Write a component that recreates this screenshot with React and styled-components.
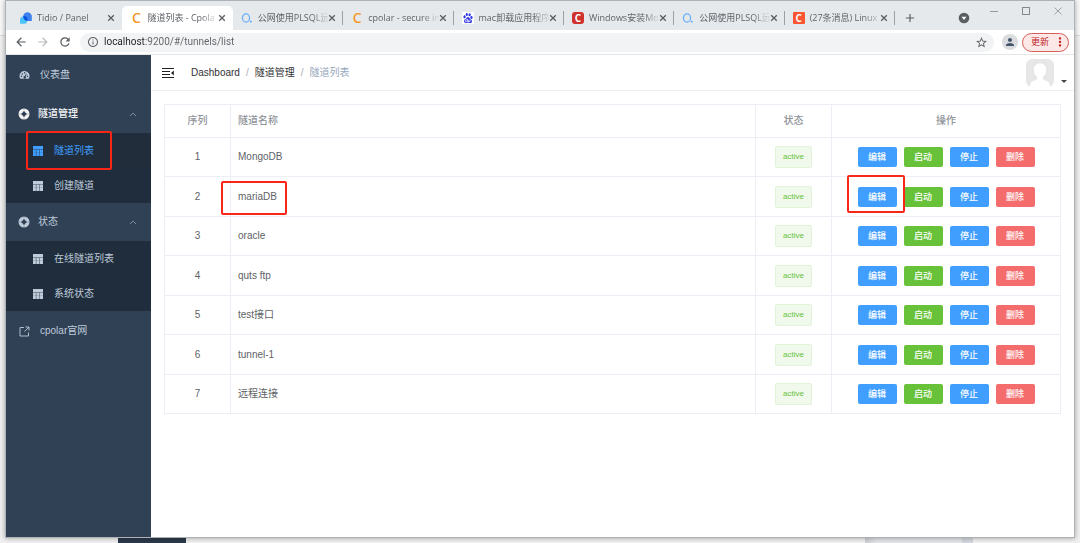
import React, { Component } from "react";
import styled, { createGlobalStyle, css } from "styled-components";
import {
  MdArrowBack,
  MdArrowForward,
  MdRefresh,
  MdInfoOutline,
  MdStarBorder,
  MdPerson,
  MdMoreVert,
  MdAdd
} from "react-icons/md";
import { SiBaidu } from "react-icons/si";

const colors = {
  menu: "#304156",
  subMenu: "#1f2d3d",
  menuText: "#bfcbd9",
  blue: "#409eff",
  green: "#67c23a",
  red: "#f56c6c",
  border: "#ebeef5",
  text: "#606266",
  lightText: "#909399",
  mark: "#fa2618"
};

const tabs = [
  { icon: "tidio", title: "Tidio / Panel" },
  { icon: "cpolar", title: "隧道列表 - Cpola", active: true },
  { icon: "ring", title: "公网使用PLSQL远", line: true },
  { icon: "cpolar", title: "cpolar - secure in", line: true },
  { icon: "baidu", title: "mac卸载应用程序", line: true },
  { icon: "csdnDark", title: "Windows安装Mo", line: true },
  { icon: "ring", title: "公网使用PLSQL远", line: true },
  { icon: "csdn", title: "(27条消息) Linux", line: true }
];

const tunnels = [
  { name: "MongoDB" },
  { name: "mariaDB", marked: true },
  { name: "oracle" },
  { name: "quts ftp" },
  { name: "test接口" },
  { name: "tunnel-1" },
  { name: "远程连接" }
];

const TidioIcon = () => (
  <svg width="12" height="12" viewBox="0 0 12 12">
    <path d="M3.200 4.300a4.300 4.300 0 1 1 8.600.7V9H7.600a4.300 4.300 0 0 1-4.400-4.700z" fill="#3b82f0" />
    <path d="M0 11.800V7.800a3.700 3.700 0 1 1 3.700 4z" fill="#4cc3fb" />
    <path d="M3.300 4.100a3.700 3.700 0 0 1 4.100 4.900 4.300 4.300 0 0 1-4.100-4.900z" fill="#0b4fdc" />
  </svg>
);

const RingIcon = () => (
  <svg width="12" height="12" viewBox="0 0 12 12">
    <ellipse cx="5" cy="6" rx="3.6" ry="4.1" fill="none" stroke="#6ab0f8" strokeWidth="1.3" />
    <circle cx="9.8" cy="9.6" r="0.9" fill="#409eff" />
  </svg>
);

const CrossIcon = () => (
  <svg width="8" height="8" viewBox="0 0 8 8">
    <path d="M1.200 1.200l5.600 5.600M6.800 1.200L1.200 6.800" stroke="currentColor" strokeWidth="1.300" />
  </svg>
);

const DropIcon = () => (
  <svg width="12" height="12" viewBox="0 0 12 12">
    <circle cx="6" cy="6" r="5.300" fill="#5a5d61" />
    <path d="M3.500 4.700h5L6 7.900z" fill="#fff" />
  </svg>
);

const DashboardIcon = () => (
  <svg width="11" height="10" viewBox="0 0 22 20">
    <path
      fill={colors.menuText}
      d="M11 2A10 10 0 0 0 1 12c0 2 .6 3.8 1.5 5.4h17A10 10 0 0 0 11 2z"
    />
    <g fill={colors.menu}>
      <circle cx="5" cy="12.5" r="1.5" />
      <circle cx="6.8" cy="7.8" r="1.5" />
      <circle cx="11.3" cy="5.6" r="1.5" />
      <circle cx="17" cy="12.5" r="1.5" />
      <path d="M14 6.8l1.5.8-2.3 5.3a2.5 2.5 0 1 1-1.7-.7z" />
    </g>
  </svg>
);

const HelpIcon = () => (
  <svg width="12" height="12" viewBox="0 0 24 24">
    <circle cx="12" cy="12" r="11" fill="currentColor" />
    <path
      d="M12 5.500l2.200 2.800 1.500 1.500 2.800 2.200-2.800 2.200-1.500 1.500-2.200 2.800-2.200-2.800-1.500-1.500L5.500 12l2.800-2.200 1.500-1.500z"
      fill={colors.menu}
    />
    <path d="M12 1v4M12 19v4M1 12h4M19 12h4" stroke={colors.menu} strokeWidth="1.500" opacity="0.4" />
  </svg>
);

const GridIcon = () => (
  <svg width="10" height="10" viewBox="0 0 20 20">
    <path
      fill="currentColor"
      d="M0 0h20v6H0zM0 7.500h5.500V20H0zM7 7.500h5.500V20H7zM14 7.500h6V20h-6z"
    />
    <path fill="currentColor" opacity="0.45" d="M0 6h20v14H0z" />
    <path d="M0 13.500h20" stroke={colors.subMenu} opacity="0.35" />
  </svg>
);

const LinkIcon = () => (
  <svg width="11" height="11" viewBox="0 0 22 22" fill="none" stroke="currentColor" strokeWidth="1.8">
    <path d="M10 3H2v17h17v-7M13 2h7v7M20 2l-9 9" />
  </svg>
);

const ChevronIcon = () => (
  <svg width="8" height="5" viewBox="0 0 8 5" fill="none" stroke="#7f8b99">
    <path d="M1 4l3-3 3 3" />
  </svg>
);

const FoldIcon = () => (
  <svg width="12" height="12" viewBox="0 0 12 12">
    <path d="M0 1.500h12M0 4.500h8M0 7.500h8M0 10.500h12" stroke="#222" />
    <path d="M11.800 3.600v4.800L9 6z" fill="#222" />
  </svg>
);

const AvatarIcon = () => (
  <svg width="28" height="28" viewBox="0 0 28 28">
    <rect width="28" height="28" rx="6" fill="#e7e7e7" />
    <path
      fill="#fff"
      d="M14 4.500c4 0 6.300 2.600 6.100 6.200 0 3.200-1.500 5.700-3.100 7.300v2.200c1.800 1.500 5.500 1.600 6.500 4.500.4 1.200.5 2.300.5 3.300H4c0-1 .1-2.100.5-3.300 1-2.900 4.700-3 6.500-4.500V18c-1.600-1.600-3.100-4.100-3.100-7.300-.2-3.600 2.100-6.200 6.100-6.200z"
    />
  </svg>
);

const Favicon = ({ type }) => {
  if (type === "tidio") return <TidioIcon />;
  if (type === "ring") return <RingIcon />;
  if (type === "baidu")
    return (
      <Badge $bg="#fff">
        <SiBaidu size={10} color="#2932e1" />
      </Badge>
    );
  if (type === "csdn") return <Badge $bg="#fc5531">C</Badge>;
  if (type === "csdnDark") return <Badge $bg="#d0312d" $round>C</Badge>;
  return <CpolarLogo>C</CpolarLogo>;
};

class Browser extends Component {
  render() {
    return (
      <div>
        <TabStrip>
          <Tabs>
            {tabs.map((tab, index) => (
              <Tab key={index} $active={tab.active} $line={tab.line}>
                <Favicon type={tab.icon} />
                <TabTitle>{tab.title}</TabTitle>
                <IconButton aria-label="关闭标签页">
                  <CrossIcon />
                </IconButton>
              </Tab>
            ))}
          </Tabs>
          <NewTab aria-label="新标签页">
            <MdAdd size={14} />
          </NewTab>
          <SearchTabs aria-label="搜索标签页">
            <DropIcon />
          </SearchTabs>
          <WindowButtons>
            <WindowButton aria-label="最小化">
              <svg width="8" height="8" viewBox="0 0 8 8"><path d="M0 4.500h8" stroke="#999" /></svg>
            </WindowButton>
            <WindowButton aria-label="最大化">
              <svg width="8" height="8" viewBox="0 0 8 8"><rect x=".5" y=".5" width="7" height="7" fill="none" stroke="#888" /></svg>
            </WindowButton>
            <WindowButton aria-label="关闭">
              <svg width="8" height="8" viewBox="0 0 8 8"><path d="M.5.5l7 7M7.500.5l-7 7" stroke="#999" strokeWidth=".9" /></svg>
            </WindowButton>
          </WindowButtons>
        </TabStrip>
        <Toolbar>
          <NavButtons>
            <IconButton aria-label="后退"><MdArrowBack size={14} /></IconButton>
            <IconButton aria-label="前进" $faded><MdArrowForward size={14} /></IconButton>
            <IconButton aria-label="刷新"><MdRefresh size={14} /></IconButton>
          </NavButtons>
          <AddressBar>
            <MdInfoOutline size={12} />
            <AddressInput
              type="text"
              aria-label="地址"
              defaultValue="localhost:9200/#/tunnels/list"
            />
            <IconButton aria-label="收藏"><MdStarBorder size={13} /></IconButton>
          </AddressBar>
          <Profile aria-label="个人资料"><MdPerson size={12} /></Profile>
          <UpdateButton>
            更新
            <MdMoreVert size={14} />
          </UpdateButton>
        </Toolbar>
      </div>
    );
  }
}

const Sidebar = () => (
  <Menu>
    <MenuItem href="#/dashboard">
      <DashboardIcon />
      仪表盘
    </MenuItem>
    <MenuGroup $active>
      <HelpIcon />
      <span>隧道管理</span>
      <ChevronIcon />
    </MenuGroup>
    <SubMenu>
      <SubItem href="#/tunnels/list" $active>
        <GridIcon />
        隧道列表
        <MenuMark />
      </SubItem>
      <SubItem href="#/tunnels/create">
        <GridIcon />
        创建隧道
      </SubItem>
    </SubMenu>
    <MenuGroup>
      <HelpIcon />
      <span>状态</span>
      <ChevronIcon />
    </MenuGroup>
    <SubMenu>
      <SubItem href="#/status/online">
        <GridIcon />
        在线隧道列表
      </SubItem>
      <SubItem href="#/status/system">
        <GridIcon />
        系统状态
      </SubItem>
    </SubMenu>
    <MenuItem href="#/site">
      <LinkIcon />
      cpolar官网
    </MenuItem>
  </Menu>
);

class TunnelTable extends Component {
  loopTunnels() {
    return tunnels.map((tunnel, index) => (
      <tr key={index}>
        <td>{index + 1}</td>
        <NameCell>
          <Anchor>
            {tunnel.name}
            {tunnel.marked && <NameMark />}
          </Anchor>
        </NameCell>
        <td>
          <Tag>active</Tag>
        </td>
        <td>
          <Actions>
            <Anchor>
              <ActionButton $color={colors.blue}>编辑</ActionButton>
              {tunnel.marked && <EditMark />}
            </Anchor>
            <ActionButton $color={colors.green}>启动</ActionButton>
            <ActionButton $color={colors.blue}>停止</ActionButton>
            <ActionButton $color={colors.red}>删除</ActionButton>
          </Actions>
        </td>
      </tr>
    ));
  }

  render() {
    return (
      <Table>
        <colgroup>
          <Col $width="66px" />
          <Col />
          <Col $width="76px" />
          <Col $width="229px" />
        </colgroup>
        <thead>
          <tr>
            <th>序列</th>
            <NameHead>隧道名称</NameHead>
            <th>状态</th>
            <th>操作</th>
          </tr>
        </thead>
        <tbody>{this.loopTunnels()}</tbody>
      </Table>
    );
  }
}

export default function App() {
  return (
    <Desktop>
      <GlobalStyle />
      <Window>
        <Browser />
        <Page>
          <Sidebar />
          <Main>
            <Navbar>
              <IconButton aria-label="折叠菜单"><FoldIcon /></IconButton>
              <Breadcrumb>
                <Crumb href="#/dashboard">Dashboard</Crumb>
                <Slash>/</Slash>
                <Crumb href="#/tunnels">隧道管理</Crumb>
                <Slash>/</Slash>
                <CurrentCrumb>隧道列表</CurrentCrumb>
              </Breadcrumb>
              <UserButton aria-label="用户菜单">
                <AvatarIcon />
                <Caret />
              </UserButton>
            </Navbar>
            <Content>
              <TunnelTable />
            </Content>
          </Main>
        </Page>
      </Window>
      <Behind>
        <DarkStrip />
        <GreyStrip />
      </Behind>
    </Desktop>
  );
}

const GlobalStyle = createGlobalStyle`
  * {
    box-sizing: border-box;
  }
  body {
    margin: 0;
    font-family: "Liberation Sans", "Noto Sans CJK SC", sans-serif;
    font-size: 10px;
    line-height: 14px;
    color: ${colors.text};
  }
  button, input {
    font: inherit;
    color: inherit;
    border: none;
    background: none;
    padding: 0;
    margin: 0;
  }
  button {
    cursor: pointer;
  }
  a {
    color: inherit;
    text-decoration: none;
  }
  svg {
    display: block;
    flex: none;
  }
`;

const Desktop = styled.div`
  display: flex;
  flex-direction: column;
  min-height: 100vh;
  background: linear-gradient(#f8f8f9 35px, #dcdcdd 35px, #dcdcdd 36px, #f0f0f1 36px);
`;

const Window = styled.div`
  position: relative;
  flex: 1;
  display: flex;
  flex-direction: column;
  margin: 0 5px;
  background: #fff;
  border: 1px solid #aeb1b5;
  box-shadow: 0 0 5px rgba(0, 0, 0, 0.35);
`;

const Behind = styled.div`
  display: flex;
  justify-content: space-between;
  height: 5px;
  padding: 0 107px 0 118px;
`;

const DarkStrip = styled.div`
  width: 68px;
  background: #2b394b;
`;

const GreyStrip = styled.div`
  width: 108px;
  background: linear-gradient(to right, #cdced1, #e4e5e8 12px, #e4e5e8 97px, #d3d6de 97px);
`;

const IconButton = styled.button`
  display: flex;
  align-items: center;
  justify-content: center;
  color: #5a5d61;
  ${props => props.$faded && css`
    color: #b9bbbe;
  `}
`;

const TabStrip = styled.div`
  display: flex;
  height: 29px;
  padding-left: 6px;
  background: #e6e9ec;
  color: #5f6368;
  font-family: "Open Sans", "Noto Sans CJK SC", sans-serif;
  font-size: 9px;
`;

const Tabs = styled.div`
  display: flex;
  flex: 0 1 883px;
  min-width: 0;
  padding-top: 5px;
`;

const Tab = styled.div`
  position: relative;
  display: flex;
  align-items: center;
  flex: 1 1 0;
  min-width: 0;
  padding: 0 7px 0 8px;
  border-radius: 5px 5px 0 0;

  ${props => props.$active && css`
    background: #fff;
  `}

  ${props => props.$line && css`
    &::after {
      content: "";
      position: absolute;
      right: 0;
      top: 5px;
      width: 1px;
      height: 14px;
      background: #9da1a6;
    }
  `}
`;

const TabTitle = styled.span`
  flex: 1;
  min-width: 0;
  margin-left: 5px;
  overflow: hidden;
  white-space: nowrap;
  mask-image: linear-gradient(to right, #000 54px, transparent 72px);
`;

const Badge = styled.span`
  display: flex;
  align-items: center;
  justify-content: center;
  flex: none;
  width: 12px;
  height: 12px;
  border-radius: ${props => (props.$round ? "3px" : "1px")};
  background: ${props => props.$bg};
  color: #fff;
  font-size: 10px;
  font-weight: 700;
`;

const CpolarLogo = styled.span`
  flex: none;
  width: 12px;
  text-align: center;
  color: #f7941e;
  font-family: "Noto Sans", sans-serif;
  font-size: 14px;
  font-weight: 500;
`;

const NewTab = styled(IconButton)`
  width: 30px;
  padding-top: 5px;
`;

const SearchTabs = styled(IconButton)`
  margin-left: auto;
  padding: 5px 8px 0 0;
`;

const WindowButtons = styled.div`
  display: flex;
  height: 19px;
`;

const WindowButton = styled(IconButton)`
  width: 32px;
`;

const Toolbar = styled.div`
  display: flex;
  align-items: center;
  height: 25px;
  padding: 0 5px 0 8px;
  border-bottom: 1px solid #e4e6e8;
`;

const NavButtons = styled.div`
  display: flex;
  gap: 8px;
`;

const AddressBar = styled.div`
  display: flex;
  align-items: center;
  flex: 1;
  height: 19px;
  margin: 0 8px;
  padding: 0 6px 0 7px;
  border-radius: 10px;
  background: #f1f3f4;
  color: #5f6368;
`;

const AddressInput = styled.input`
  flex: 1;
  min-width: 0;
  margin-left: 5px;
  outline: none;
  font-family: Roboto, sans-serif;
  background: linear-gradient(to right, #202124 42px, #5f6368 42px);
  background-clip: text;
  -webkit-text-fill-color: transparent;
`;

const Profile = styled(IconButton)`
  width: 16px;
  height: 16px;
  border-radius: 50%;
  background: #dadce0;
  color: #44546a;
`;

const UpdateButton = styled.button`
  display: flex;
  align-items: center;
  justify-content: space-between;
  width: 47px;
  height: 19px;
  margin-left: 4px;
  padding: 0 1px 0 8px;
  border: 1px solid #d9605a;
  border-radius: 10px;
  background: #fce8e6;
  color: #c5221f;
  font-size: 9px;
`;

const Page = styled.div`
  display: flex;
  flex: 1;
`;

const Menu = styled.nav`
  flex: none;
  width: 145px;
  background: ${colors.menu};
  color: ${colors.menuText};
`;

const MenuItem = styled.a`
  display: flex;
  align-items: center;
  gap: 10px;
  height: 40px;
  padding-left: 13px;
`;

const MenuGroup = styled.div`
  display: flex;
  align-items: center;
  gap: 8px;
  height: 38px;
  padding: 0 14px 0 12px;
  ${props => props.$active && css`
    color: #f4f4f5;
    font-weight: 500;
  `}

  span {
    flex: 1;
  }
`;

const SubMenu = styled.div`
  background: ${colors.subMenu};
`;

const SubItem = styled.a`
  position: relative;
  display: flex;
  align-items: center;
  gap: 11px;
  height: 35px;
  padding-left: 27px;
  ${props => props.$active && css`
    color: ${colors.blue};
    background: #212d3a;
  `}
`;

const Anchor = styled.span`
  position: relative;
`;

const Mark = styled.span`
  position: absolute;
  z-index: 1;
  border: 2px solid ${colors.mark};
  border-radius: 2px;
  pointer-events: none;
`;

const MenuMark = styled(Mark)`
  inset: -2px 39px -2px 20px;
`;

const NameMark = styled(Mark)`
  inset: -10px -10px -13px -17px;
`;

const EditMark = styled(Mark)`
  inset: -12px -8px -6px -11px;
`;

const Main = styled.main`
  flex: 1;
  min-width: 0;
`;

const Navbar = styled.header`
  display: flex;
  align-items: center;
  height: 36px;
  padding: 0 7px 0 11px;
  border-bottom: 1px solid #eff0f2;
`;

const Breadcrumb = styled.nav`
  display: flex;
  margin-left: 17px;
`;

const Crumb = styled.a`
  color: #303133;
`;

const Slash = styled.span`
  margin: 0 6px;
  color: #a8adb6;
`;

const CurrentCrumb = styled.span`
  color: #97a8be;
`;

const UserButton = styled.button`
  display: flex;
  align-items: flex-end;
  gap: 7px;
  margin-left: auto;
`;

const Caret = styled.span`
  margin-bottom: 4px;
  border: 3px solid transparent;
  border-top-color: #444;
  border-bottom: none;
`;

const Content = styled.section`
  padding: 13px;
`;

const Table = styled.table`
  width: 100%;
  table-layout: fixed;
  border-collapse: collapse;

  th, td {
    padding: 0;
    border: 1px solid ${colors.border};
    text-align: center;
  }

  th {
    height: 33px;
    color: ${colors.lightText};
    font-weight: 500;
  }

  td {
    height: 39px;
  }

  tr:nth-child(even) td {
    height: 40px;
  }
`;

const Col = styled.col`
  width: ${props => props.$width || "auto"};
`;

const NameHead = styled.th`
  && {
    padding-left: 7px;
    text-align: left;
  }
`;

const NameCell = styled.td`
  && {
    padding-left: 7px;
    text-align: left;
  }
`;

const Tag = styled.span`
  display: inline-block;
  height: 22px;
  padding: 0 7px;
  border: 1px solid #e1f3d8;
  border-radius: 2px;
  background: #f0f9eb;
  color: ${colors.green};
  font-size: 8px;
  line-height: 20px;
  vertical-align: middle;
`;

const Actions = styled.div`
  display: flex;
  justify-content: center;
  gap: 7px;
`;

const ActionButton = styled.button`
  display: block;
  width: 39px;
  height: 20px;
  border-radius: 2px;
  background: ${props => props.$color};
  color: #fff;
  font-size: 9px;
  font-weight: 500;
`;
